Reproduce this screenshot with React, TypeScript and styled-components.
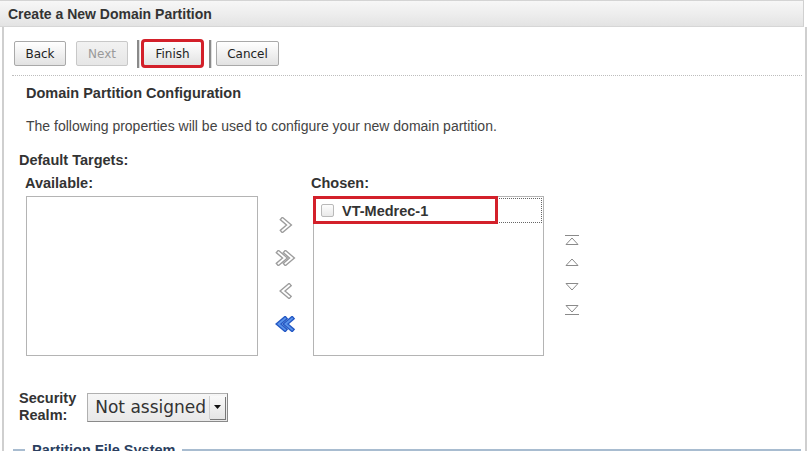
import React from "react";
import styled, { createGlobalStyle } from "styled-components";

const Global = createGlobalStyle`
  html, body { margin: 0; padding: 0; background: #fff; }
  body { font-family: "Liberation Sans", Arial, sans-serif; color: #222; }
`;

const Frame = styled.div`
  width: 809px;
  height: 451px;
  overflow: hidden;
  background: #fff;
  display: flex;
  flex-direction: column;
  box-sizing: border-box;
`;

const Header = styled.div`
  height: 27px;
  flex: none;
  box-sizing: border-box;
  margin-right: 5px;
  border-top: 1px solid #d4d4d4;
  border-bottom: 1px solid #d6d6d6;
  border-right: 1px solid #d0d0d0;
  background: linear-gradient(#f7f7f7, #ececec 60%, #e3e3e3);
  display: flex;
  align-items: center;
  padding-left: 8px;
  font-weight: bold;
  font-size: 14px;
  color: #333;
`;

const Body = styled.div`
  flex: 1;
  margin-left: 2px;
  margin-right: 2px;
  border-left: 2px solid #cfcfcf;
  border-right: 2px solid #cfcfcf;
  display: flex;
  flex-direction: column;
`;

const Toolbar = styled.div`
  display: flex;
  align-items: center;
  padding: 14px 0 0 10px;
  height: 25px;
`;

const Button = styled.div<{ $disabled?: boolean; $w: number; $ml?: number; $hl?: boolean }>`
  box-sizing: border-box;
  width: ${(p) => p.$w}px;
  margin-left: ${(p) => p.$ml ?? 0}px;
  height: 25px;
  display: flex;
  align-items: center;
  justify-content: center;
  font-family: "DejaVu Sans", sans-serif;
  font-size: 12px;
  color: ${(p) => (p.$disabled ? "#9a9a9a" : "#222")};
  border: 1px solid ${(p) => (p.$disabled ? "#c8c8c8" : "#a9a9a9")};
  border-radius: 2px;
  background: ${(p) =>
    p.$disabled
      ? "linear-gradient(#f2f2f2, #e6e6e6)"
      : "linear-gradient(#ffffff, #f1f1f1 50%, #e2e2e2)"};
  outline: ${(p) => (p.$hl ? "3px solid #d3202a" : "none")};
  outline-offset: -1px;
`;

const Sep = styled.div<{ $ml: number }>`
  width: 2px;
  height: 28px;
  margin-left: ${(p) => p.$ml}px;
  background: #8a8a8a;
  border-right: 1px solid #ddd;
`;

const Dotted = styled.div`
  margin: 9px 3px 0 8px;
  border-top: 1px dotted #bdbdbd;
`;

const SectionTitle = styled.div`
  margin: 9px 0 0 22px;
  font-weight: bold;
  font-size: 14.5px;
  line-height: 17px;
  color: #333;
`;

const Desc = styled.div`
  margin: 16px 0 0 22px;
  font-size: 14px;
  line-height: 17px;
  color: #444;
`;

const FieldLabel = styled.div`
  margin: 17px 0 0 15px;
  font-weight: bold;
  font-size: 14.5px;
  line-height: 17px;
  color: #333;
`;

const Shuttle = styled.div`
  display: grid;
  grid-template-columns: 232px 55px 231px 56px;
  grid-template-rows: 17px 160px;
  row-gap: 4px;
  margin: 6px 0 0 22px;
`;

const ColLabel = styled.div<{ $ml?: number }>`
  font-weight: bold;
  font-size: 14.5px;
  line-height: 17px;
  color: #333;
  margin-left: ${(p) => p.$ml ?? 0}px;
`;

const ListBox = styled.div`
  box-sizing: border-box;
  border: 1px solid #b4b4b4;
  background: #fff;
  position: relative;
`;

const Row = styled.div`
  position: relative;
  margin: 1px 1px 0 1px;
  height: 23px;
  border: 1px dotted #666;
  display: flex;
  align-items: center;
  padding-left: 5px;
  gap: 8px;
  font-weight: bold;
  font-size: 14.5px;
  color: #333;
`;

const Highlight = styled.div`
  position: absolute;
  left: -3px;
  top: -3px;
  width: 185px;
  height: 28px;
  box-sizing: border-box;
  border: 3px solid #d3202a;
`;

const Check = styled.span`
  width: 13px;
  height: 13px;
  box-sizing: border-box;
  border: 1px solid #b9b9b9;
  border-radius: 2px;
  background: linear-gradient(#fdfdfd, #e9e9e9);
`;

const ArrowCol = styled.div`
  display: flex;
  flex-direction: column;
  align-items: center;
  padding-top: 21px;
  gap: 17px;
`;

const ReorderCol = styled.div`
  display: flex;
  flex-direction: column;
  align-items: center;
  padding-top: 38px;
`;

const IconBox = styled.div<{ $mt?: number; $h?: number }>`
  height: ${(p) => p.$h ?? 16}px;
  display: flex;
  align-items: center;
  justify-content: center;
  margin-top: ${(p) => p.$mt ?? 0}px;
`;

const RealmRow = styled.div`
  display: flex;
  align-items: center;
  margin: 34px 0 0 15px;
  gap: 11px;
`;

const RealmLabel = styled.div`
  font-weight: bold;
  font-size: 14.5px;
  line-height: 17px;
  color: #333;
`;

const Select = styled.div`
  box-sizing: border-box;
  width: 141px;
  height: 29px;
  border: 1px solid #b0b0b0;
  border-right-color: #8a8a8a;
  border-bottom-color: #8a8a8a;
  background: linear-gradient(#f6f6f6, #e8e8e8);
  display: flex;
  align-items: center;
  padding-left: 7px;
  font-family: "DejaVu Sans", sans-serif;
  font-size: 17px;
  color: #333;
`;

const SelectText = styled.span`
  flex: 1;
`;

const SelectArrow = styled.div`
  width: 15px;
  height: 23px;
  margin-right: 2px;
  border-left: 1px solid #d0d0d0;
  background: linear-gradient(#fafafa, #e4e4e4);
  display: flex;
  align-items: center;
  justify-content: center;
  box-shadow: 1px 1px 0 #777;
`;

const Legend = styled.div`
  display: flex;
  align-items: center;
  margin: 18px 0 0 4px;
  gap: 7px;
  font-weight: bold;
  font-size: 14.5px;
  color: #2b3f60;
  height: 16px;
`;

const LegendLine = styled.div<{ $w?: number }>`
  height: 3px;
  background: #a8bcd0;
  ${(p) => (p.$w ? `width: ${p.$w}px; margin-left: 5px;` : "flex: 1; margin-right: 4px;")}
`;

const Chev = ({ dir, double, blue }: { dir: "l" | "r"; double?: boolean; blue?: boolean }) => {
  const w = double ? 21 : 14;
  const pts = (x: number) =>
    dir === "r" ? `${x},2.5 ${x + 6.5},8 ${x},13.5` : `${x + 6.5},2.5 ${x},8 ${x + 6.5},13.5`;
  const xs = double ? [3.5, 10.5] : [3.5];
  const outer = blue ? "#2458c4" : "#9d9d9d";
  const inner = blue ? "#5a93ea" : "#ffffff";
  return (
    <svg width={w} height={16} viewBox={`0 0 ${w} 16`}>
      {xs.map((x) => (
        <g key={x}>
          <polyline points={pts(x)} fill="none" stroke={outer} strokeWidth={4.5} strokeLinejoin="miter" strokeLinecap="square" />
          <polyline points={pts(x)} fill="none" stroke={inner} strokeWidth={1.8} strokeLinejoin="miter" strokeLinecap="square" />
        </g>
      ))}
    </svg>
  );
};

const Tri = ({ up, bar }: { up: boolean; bar: boolean }) => (
  <svg width={16} height={12} viewBox="0 0 16 12">
    {up ? (
      <>
        {bar && <line x1={1} y1={1.5} x2={15} y2={1.5} stroke="#8a8a8a" strokeWidth={1} />}
        <polygon points="2,10.5 8,4 14,10.5" fill="#fff" stroke="#8a8a8a" strokeWidth={1} />
      </>
    ) : (
      <>
        <polygon points="2,1.5 8,8 14,1.5" fill="#fff" stroke="#8a8a8a" strokeWidth={1} />
        {bar && <line x1={1} y1={10.5} x2={15} y2={10.5} stroke="#8a8a8a" strokeWidth={1} />}
      </>
    )}
  </svg>
);

export default function App() {
  return (
    <>
      <Global />
      <Frame>
        <Header>Create a New Domain Partition</Header>
        <Body>
          <Toolbar>
            <Button $w={52}>Back</Button>
            <Button $w={52} $ml={10} $disabled>
              Next
            </Button>
            <Sep $ml={9} />
            <Button $w={59} $ml={3} $hl>
              Finish
            </Button>
            <Sep $ml={7} />
            <Button $w={63} $ml={4}>
              Cancel
            </Button>
          </Toolbar>
          <Dotted />
          <SectionTitle>Domain Partition Configuration</SectionTitle>
          <Desc>The following properties will be used to configure your new domain partition.</Desc>
          <FieldLabel>Default Targets:</FieldLabel>
          <Shuttle>
            <ColLabel $ml={-1}>Available:</ColLabel>
            <div />
            <ColLabel $ml={-2}>Chosen:</ColLabel>
            <div />
            <ListBox />
            <ArrowCol>
              <IconBox><Chev dir="r" /></IconBox>
              <IconBox><Chev dir="r" double /></IconBox>
              <IconBox><Chev dir="l" /></IconBox>
              <IconBox><Chev dir="l" double blue /></IconBox>
            </ArrowCol>
            <ListBox>
              <Row>
                <Highlight />
                <Check />
                VT-Medrec-1
              </Row>
            </ListBox>
            <ReorderCol>
              <IconBox $h={12}><Tri up bar /></IconBox>
              <IconBox $h={12} $mt={9}><Tri up bar={false} /></IconBox>
              <IconBox $h={12} $mt={15}><Tri up={false} bar={false} /></IconBox>
              <IconBox $h={12} $mt={10}><Tri up={false} bar /></IconBox>
            </ReorderCol>
          </Shuttle>
          <RealmRow>
            <RealmLabel>
              Security
              <br />
              Realm:
            </RealmLabel>
            <Select>
              <SelectText>Not assigned</SelectText>
              <SelectArrow>
                <svg width={7} height={4} viewBox="0 0 7 4">
                  <polygon points="0,0 7,0 3.5,4" fill="#111" />
                </svg>
              </SelectArrow>
            </Select>
          </RealmRow>
          <Legend>
            <LegendLine $w={12} />
            Partition File System
            <LegendLine />
          </Legend>
        </Body>
      </Frame>
    </>
  );
}
